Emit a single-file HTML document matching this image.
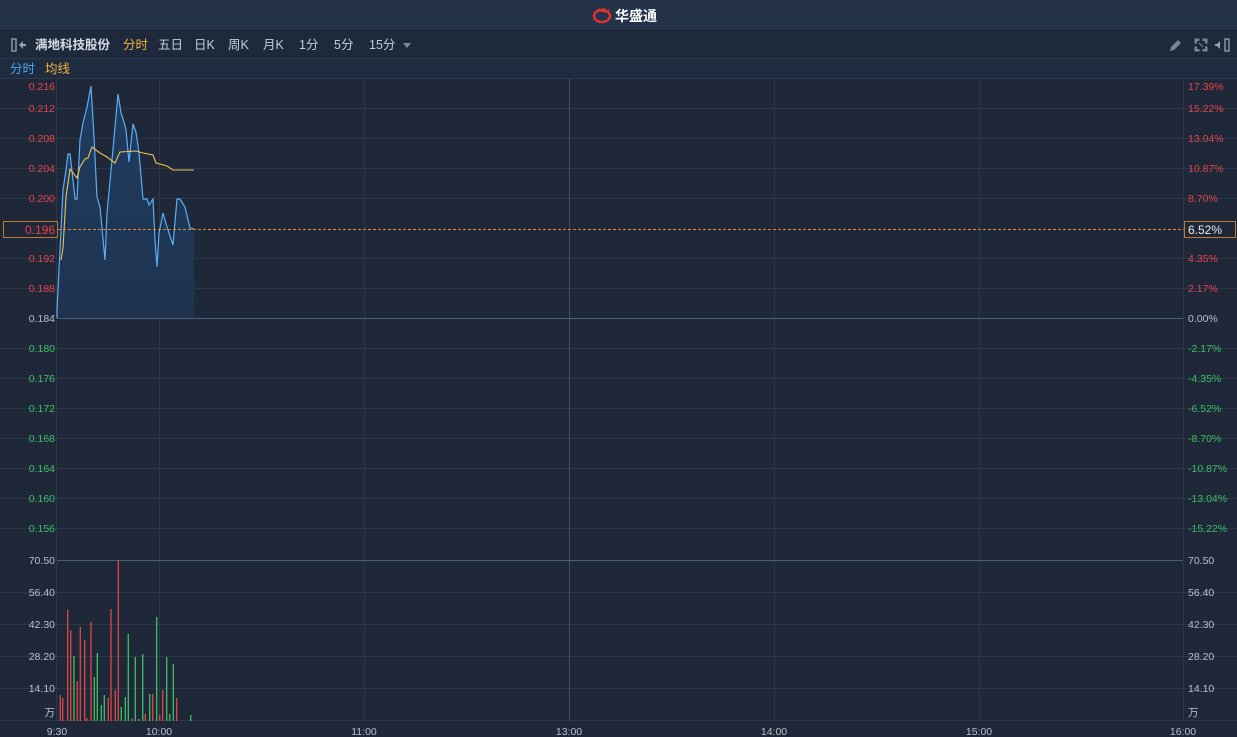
<!DOCTYPE html>
<html><head><meta charset="utf-8"><style>
body{margin:0;width:1237px;height:737px;overflow:hidden;background:#1e2839;font-family:"Liberation Sans","Noto Sans CJK SC",sans-serif}
svg{display:block}
</style></head><body>
<svg width="1237" height="737" xmlns="http://www.w3.org/2000/svg" font-family="Liberation Sans, Noto Sans CJK SC, sans-serif">
<defs><linearGradient id="ag" x1="0" y1="0" x2="0" y2="1"><stop offset="0" stop-color="#1f3d60"/><stop offset="1" stop-color="#1f3350"/></linearGradient></defs>
<rect width="1237" height="737" fill="#1e2838"/>
<rect width="1237" height="30" fill="#243349"/>
<rect y="30" width="1237" height="1" fill="#151d29"/>
<rect y="31" width="1237" height="28" fill="#1e2a3b"/>
<rect y="58" width="1237" height="1" fill="#2c3a4d"/>
<rect y="59" width="1237" height="19" fill="#1f2b3e"/>
<rect y="78" width="1237" height="1" fill="#2c3a4d"/>
<g transform="translate(593,8)">
<ellipse cx="9" cy="8" rx="8" ry="6" fill="none" stroke="#e0322c" stroke-width="2.5"/>
<path d="M3 3 L6 0 L8 3 L11 -1 L13 3 L17 1 L15 5" fill="#e0322c"/>
</g>
<text x="615" y="21" font-size="14" font-weight="bold" fill="#ffffff">华盛通</text>
<rect x="12" y="39" width="4" height="12" fill="none" stroke="#9aa3b0" stroke-width="1.3"/>
<path d="M19 45 L23 41 L23 49Z M22 44h4v2h-4z" fill="#9aa3b0"/>
<g font-size="12.5">
<text x="35" y="49" fill="#d5dbe4" font-weight="bold">满地科技股份</text>
<text x="123" y="49" fill="#f0b43c">分时</text>
<text x="158" y="49" fill="#c5cdd8">五日</text>
<text x="194" y="49" fill="#c5cdd8">日K</text>
<text x="228" y="49" fill="#c5cdd8">周K</text>
<text x="263" y="49" fill="#c5cdd8">月K</text>
<text x="299" y="49" fill="#c5cdd8">1分</text>
<text x="334" y="49" fill="#c5cdd8">5分</text>
<text x="369" y="49" fill="#c5cdd8">15分</text>
<text x="10" y="73" fill="#4aa3f0">分时</text>
<text x="45" y="73" fill="#f0b43c">均线</text>
</g>
<path d="M403 43 L411 43 L407 48Z" fill="#7b8594"/>
<path d="M1170 51 L1171 47 L1178 40 L1181 43 L1174 50Z" fill="#7b8594"/>
<path d="M1195 39h4v1.5h-2.5v2.5h-1.5z M1207 39h-4v1.5h2.5v2.5h1.5z M1195 51h4v-1.5h-2.5v-2.5h-1.5z M1207 51h-4v-1.5h2.5v-2.5h1.5z M1199 43l4 4" fill="#7b8594" stroke="#7b8594" stroke-width="1"/>
<path d="M1216 45 L1220 41 L1220 49Z M1215 44h3v2h-3z" fill="#9aa3b0"/>
<rect x="1225" y="39" width="4" height="12" fill="none" stroke="#9aa3b0" stroke-width="1.3"/>
<g stroke="#2b384a" stroke-width="1">
<line x1="56.5" y1="79" x2="56.5" y2="721"/>
<line x1="159.5" y1="79" x2="159.5" y2="721"/>
<line x1="364.5" y1="79" x2="364.5" y2="721"/>
<line x1="774.5" y1="79" x2="774.5" y2="721"/>
<line x1="979.5" y1="79" x2="979.5" y2="721"/>
<line x1="1183.5" y1="79" x2="1183.5" y2="721"/>
<line x1="0" y1="108.5" x2="1237" y2="108.5"/><line x1="0" y1="138.5" x2="1237" y2="138.5"/>
<line x1="0" y1="168.5" x2="1237" y2="168.5"/><line x1="0" y1="198.5" x2="1237" y2="198.5"/>
<line x1="0" y1="258.5" x2="1237" y2="258.5"/><line x1="0" y1="288.5" x2="1237" y2="288.5"/>
<line x1="0" y1="348.5" x2="1237" y2="348.5"/><line x1="0" y1="378.5" x2="1237" y2="378.5"/>
<line x1="0" y1="408.5" x2="1237" y2="408.5"/><line x1="0" y1="438.5" x2="1237" y2="438.5"/>
<line x1="0" y1="468.5" x2="1237" y2="468.5"/><line x1="0" y1="498.5" x2="1237" y2="498.5"/>
<line x1="0" y1="528.5" x2="1237" y2="528.5"/>
<line x1="0" y1="592.5" x2="1237" y2="592.5"/><line x1="0" y1="624.5" x2="1237" y2="624.5"/>
<line x1="0" y1="656.5" x2="1237" y2="656.5"/><line x1="0" y1="688.5" x2="1237" y2="688.5"/>
<line x1="0" y1="720.5" x2="1237" y2="720.5"/>
</g>
<line x1="569.5" y1="79" x2="569.5" y2="721" stroke="#415066"/>
<line x1="57" y1="318.5" x2="1183" y2="318.5" stroke="#4d5e78"/>
<line x1="57" y1="560.5" x2="1183" y2="560.5" stroke="#4d5e78"/>
<path d="M57 318 L57 310 L59 270 L63 190 L66 170 L68 154 L70 154 L73 180 L75 199 L77 199 L80 140 L83 123 L87 107 L91 86 L94 137 L97 197 L100 207 L105 260 L107 213 L112 160 L118 94 L121 113 L124 122 L126 130 L129 162 L133 124 L136 132 L139 153 L143 199 L147 199 L149 205 L153 199 L155 240 L157 267 L159 233 L163 213 L167 227 L173 245 L177 199 L180 199 L185 207 L190 228 L194 229 L194 318Z" fill="url(#ag)"/>
<polyline fill="none" stroke="#5aaef5" stroke-width="1.2" points="57,318 57,310 59,270 63,190 66,170 68,154 70,154 73,180 75,199 77,199 80,140 83,123 87,107 91,86 94,137 97,197 100,207 105,260 107,213 112,160 118,94 121,113 124,122 126,130 129,162 133,124 136,132 139,153 143,199 147,199 149,205 153,199 155,240 157,267 159,233 163,213 167,227 173,245 177,199 180,199 185,207 190,228 194,229"/>
<polyline fill="none" stroke="#f0c050" stroke-width="1.1" points="61,260 63,248 66,197 70,169 77,178 80,167 85,159 88,158 92,147 100,153 107,157 115,163 120,152 136,151 143,153 153,155 156,163 167,166 173,170 194,170"/>
<line x1="58" y1="229.5" x2="1184" y2="229.5" stroke="#e08a30" stroke-width="1" stroke-dasharray="3,2"/>
<rect x="3.5" y="221.5" width="54" height="16" fill="#1e2838" stroke="#c27a2c"/>
<rect x="1184.5" y="221.5" width="51" height="16" fill="#1e2838" stroke="#c27a2c"/>
<g stroke-width="1.3">
<g stroke="#e04848">
<line x1="60.3" y1="695" x2="60.3" y2="721"/><line x1="62.7" y1="698" x2="62.7" y2="721"/>
<line x1="67.7" y1="610" x2="67.7" y2="721"/><line x1="70.7" y1="630" x2="70.7" y2="721"/>
<line x1="77.3" y1="681" x2="77.3" y2="721"/><line x1="80.3" y1="627" x2="80.3" y2="721"/>
<line x1="84.7" y1="640" x2="84.7" y2="721"/><line x1="87" y1="718" x2="87" y2="721"/>
<line x1="91" y1="622" x2="91" y2="721"/><line x1="108.3" y1="698" x2="108.3" y2="721"/>
<line x1="111" y1="609" x2="111" y2="721"/><line x1="115.3" y1="690" x2="115.3" y2="721"/>
<line x1="118.3" y1="561" x2="118.3" y2="721"/><line x1="132.3" y1="718" x2="132.3" y2="721"/>
<line x1="145.3" y1="714" x2="145.3" y2="721"/><line x1="152.7" y1="694" x2="152.7" y2="721"/>
<line x1="159.7" y1="715" x2="159.7" y2="721"/><line x1="162.7" y1="690" x2="162.7" y2="721"/>
<line x1="176.7" y1="698" x2="176.7" y2="721"/>
</g>
<g stroke="#3fc060">
<line x1="74" y1="656" x2="74" y2="721"/><line x1="94.3" y1="677" x2="94.3" y2="721"/>
<line x1="97.3" y1="653" x2="97.3" y2="721"/><line x1="101.3" y1="705" x2="101.3" y2="721"/>
<line x1="104.3" y1="695" x2="104.3" y2="721"/><line x1="121.3" y1="707" x2="121.3" y2="721"/>
<line x1="125.3" y1="697" x2="125.3" y2="721"/><line x1="128.3" y1="634" x2="128.3" y2="721"/>
<line x1="135.3" y1="657" x2="135.3" y2="721"/><line x1="138.7" y1="719" x2="138.7" y2="721"/>
<line x1="142.7" y1="654" x2="142.7" y2="721"/><line x1="149.7" y1="694" x2="149.7" y2="721"/>
<line x1="156.7" y1="617" x2="156.7" y2="721"/><line x1="166.7" y1="657" x2="166.7" y2="721"/>
<line x1="169.7" y1="714" x2="169.7" y2="721"/><line x1="173.3" y1="664" x2="173.3" y2="721"/>
<line x1="190.7" y1="715" x2="190.7" y2="721"/>
</g></g>
<g font-size="10.5" text-anchor="end">
<g fill="#e8434a">
<text x="55" y="90">0.216</text><text x="55" y="112">0.212</text><text x="55" y="142">0.208</text>
<text x="55" y="172">0.204</text><text x="55" y="202">0.200</text><text x="55" y="262">0.192</text><text x="55" y="292">0.188</text>
</g>
<text x="55" y="322" fill="#b8c0cc">0.184</text>
<g fill="#3cc060">
<text x="55" y="352">0.180</text><text x="55" y="382">0.176</text><text x="55" y="412">0.172</text>
<text x="55" y="442">0.168</text><text x="55" y="472">0.164</text><text x="55" y="502">0.160</text><text x="55" y="532">0.156</text>
</g>
<text x="55" y="234" font-size="12" fill="#e8434a">0.196</text>
<g fill="#b8c0cc">
<text x="55" y="564">70.50</text><text x="55" y="596">56.40</text><text x="55" y="628">42.30</text>
<text x="55" y="660">28.20</text><text x="55" y="692">14.10</text><text x="55" y="716">万</text>
</g>
</g>
<g font-size="10.5">
<g fill="#e8434a">
<text x="1188" y="90">17.39%</text><text x="1188" y="112">15.22%</text><text x="1188" y="142">13.04%</text>
<text x="1188" y="172">10.87%</text><text x="1188" y="202">8.70%</text><text x="1188" y="262">4.35%</text><text x="1188" y="292">2.17%</text>
</g>
<text x="1188" y="322" fill="#b8c0cc">0.00%</text>
<g fill="#3cc060">
<text x="1188" y="352">-2.17%</text><text x="1188" y="382">-4.35%</text><text x="1188" y="412">-6.52%</text>
<text x="1188" y="442">-8.70%</text><text x="1188" y="472">-10.87%</text><text x="1188" y="502">-13.04%</text><text x="1188" y="532">-15.22%</text>
</g>
<text x="1188" y="234" font-size="12" fill="#e6eaf0">6.52%</text>
<g fill="#b8c0cc">
<text x="1188" y="564">70.50</text><text x="1188" y="596">56.40</text><text x="1188" y="628">42.30</text>
<text x="1188" y="660">28.20</text><text x="1188" y="692">14.10</text><text x="1188" y="716">万</text>
</g>
<g fill="#b8c0cc" text-anchor="middle">
<text x="57" y="735">9:30</text><text x="159" y="735">10:00</text><text x="364" y="735">11:00</text>
<text x="569" y="735">13:00</text><text x="774" y="735">14:00</text><text x="979" y="735">15:00</text><text x="1183" y="735">16:00</text>
</g>
</g>
</svg>
</body></html>
